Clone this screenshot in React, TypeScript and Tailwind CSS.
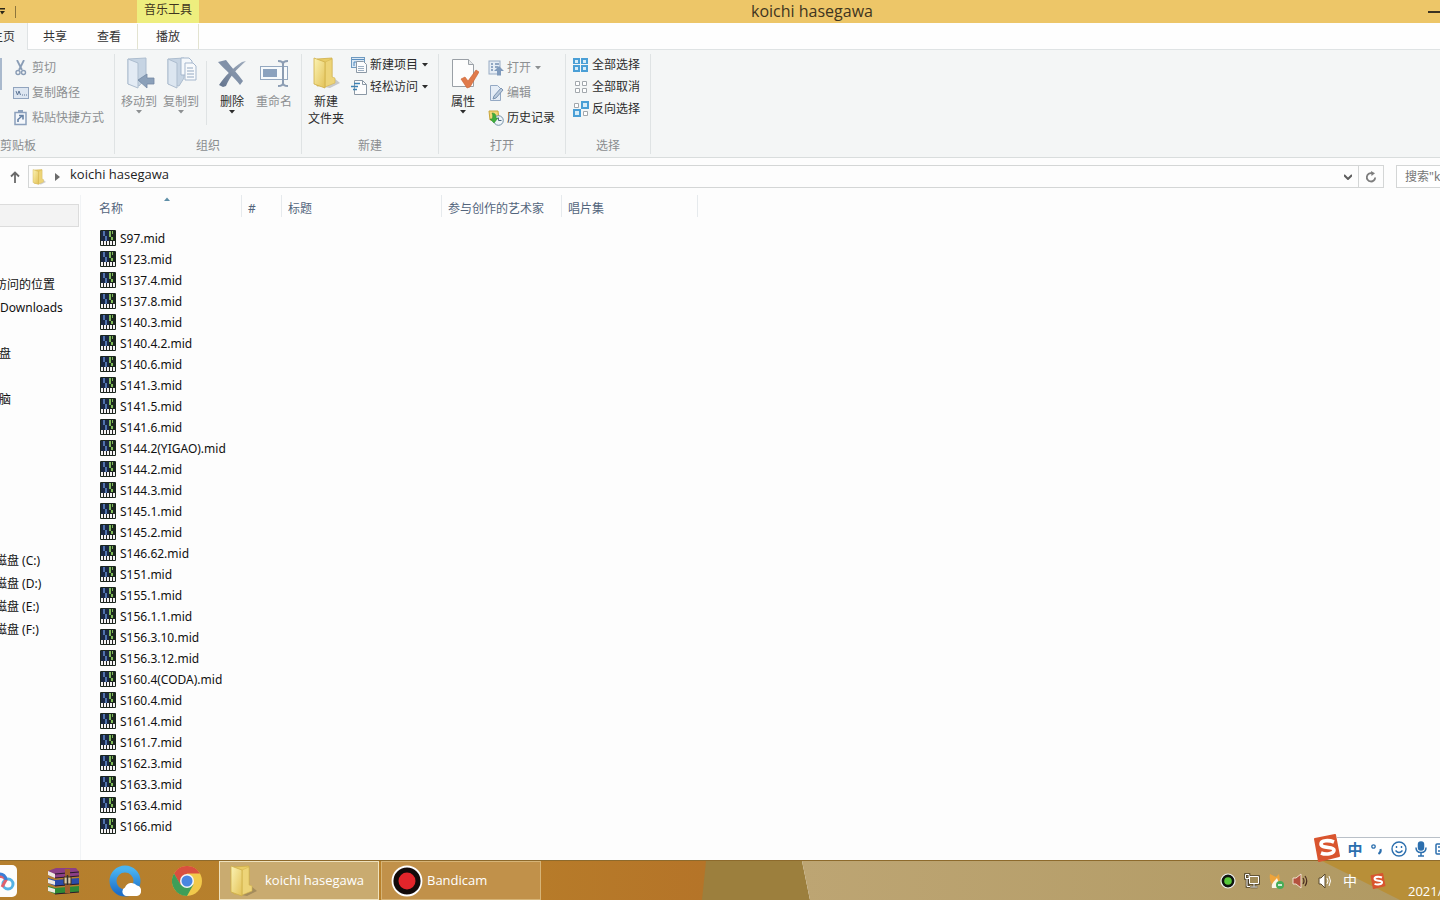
import type { ReactNode } from "react";

const files = [
  "S97.mid",
  "S123.mid",
  "S137.4.mid",
  "S137.8.mid",
  "S140.3.mid",
  "S140.4.2.mid",
  "S140.6.mid",
  "S141.3.mid",
  "S141.5.mid",
  "S141.6.mid",
  "S144.2(YIGAO).mid",
  "S144.2.mid",
  "S144.3.mid",
  "S145.1.mid",
  "S145.2.mid",
  "S146.62.mid",
  "S151.mid",
  "S155.1.mid",
  "S156.1.1.mid",
  "S156.3.10.mid",
  "S156.3.12.mid",
  "S160.4(CODA).mid",
  "S160.4.mid",
  "S161.4.mid",
  "S161.7.mid",
  "S162.3.mid",
  "S163.3.mid",
  "S163.4.mid",
  "S166.mid",
];

// One entry per 23px row of the navigation pane, empty rows included
const navRows = [
  "",
  "",
  "访问的位置",
  "Downloads",
  "",
  "盘",
  "",
  "脑",
  "",
  "",
  "",
  "",
  "",
  "",
  "磁盘 (C:)",
  "磁盘 (D:)",
  "磁盘 (E:)",
  "磁盘 (F:)",
];

function Caret({ className = "" }: { className?: string }) {
  return (
    <svg className={className} width="6" height="4" viewBox="0 0 6 4" fill="currentColor">
      <path d="M0 0h6L3 3.5z" />
    </svg>
  );
}

function FolderIcon({ size = 32 }: { size?: number }) {
  return (
    <svg className="shrink-0" width={size} height={size} viewBox="0 0 32 32">
      <defs>
        <linearGradient id="folder-front" x1="0" x2="1" y1="0" y2="1">
          <stop offset="0" stopColor="#fbf3b4" />
          <stop offset="1" stopColor="#e3c257" />
        </linearGradient>
      </defs>
      <path d="M24 21l6 5-10 5-6-1z" fill="#000" opacity=".18" />
      <path d="M7 2l15-1v20l-3 7-12 1z" fill="#e8cc66" stroke="#cfae48" strokeWidth=".8" />
      <path d="M15 5l7-3v18l3 1v5l-10 4z" fill="#edd478" stroke="#d5b650" strokeWidth=".6" />
      <path d="M4 1l11 4v26L4 27z" fill="url(#folder-front)" stroke="#cfae48" strokeWidth=".8" />
    </svg>
  );
}

function MoveToIcon() {
  return (
    <svg width="32" height="32" viewBox="0 0 32 32">
      <path d="M5 2l18-1v20l-7 8-11-2z" fill="#c6d4e3" stroke="#adbdcf" />
      <path d="M5 2l10 4v25L5 27z" fill="#e3ebf4" stroke="#adbdcf" />
      <path d="M15 23l9-6v4h7v6h-7v4z" fill="#8ba0b9" stroke="#7389a3" strokeWidth=".8" />
    </svg>
  );
}

function CopyToIcon() {
  return (
    <svg width="32" height="32" viewBox="0 0 32 32">
      <path d="M3 2l16-1v20l-5 8-11-2z" fill="#c6d4e3" stroke="#adbdcf" />
      <path d="M3 2l9 4v25l-9-4z" fill="#dce6f0" stroke="#adbdcf" />
      <path d="M16 1h8l3 3v14H16z" fill="#f5f8fb" stroke="#a5b7cd" />
      <path d="M20 6h8l3 3v14H20z" fill="#f8fafc" stroke="#a5b7cd" />
      <path d="M22 11h6M22 14h7M22 17h7M22 20h7" stroke="#93a8c1" />
    </svg>
  );
}

function DeleteIcon() {
  return (
    <svg width="32" height="32" viewBox="0 0 32 32">
      <defs>
        <linearGradient id="delete-stroke" x1="0" x2="1" y1="1" y2="0">
          <stop offset="0" stopColor="#62738d" />
          <stop offset="1" stopColor="#a0adbe" />
        </linearGradient>
      </defs>
      <path d="M2 5l8-2c5 7 12 14 17 21l-3 4C18 20 10 14 2 5z" fill="#8191a8" />
      <path d="M30 4l-4 1C17 11 9 19 3 28l4 2 3-1C14 19 21 12 30 4z" fill="url(#delete-stroke)" />
    </svg>
  );
}

function RenameIcon() {
  return (
    <svg width="32" height="32" viewBox="0 0 32 32" fill="none">
      <rect x="2.5" y="9.5" width="27" height="13" fill="#f7fafc" stroke="#94a8c0" />
      <rect x="5" y="12" width="14" height="8" fill="#8ba2be" />
      <path d="M20 4q5 0 5 3q0-3 5-3M25 6v21M20 29q5 0 5-3q0 3 5 3" stroke="#8c9db3" strokeWidth="2" />
    </svg>
  );
}

function PropertiesIcon() {
  return (
    <svg width="32" height="32" viewBox="0 0 32 32">
      <path d="M5.500 2.500h16l5 5v22h-21z" fill="#fdfdfd" stroke="#9aa0a6" />
      <path d="M21.500 2.500v5h5" fill="#e5e8ea" stroke="#9aa0a6" />
      <path d="M14 22l4-2 3 4 8-11 3 2-9 15-3 1z" fill="#e07a4a" stroke="#c9602f" strokeWidth=".6" />
    </svg>
  );
}

function ScissorsIcon() {
  return (
    <svg width="16" height="16" viewBox="0 0 16 16" fill="none" stroke="#8a9db6">
      <path d="M4 0l5 10M11 0L6 10" strokeWidth="1.800" />
      <circle cx="5" cy="12.500" r="2" strokeWidth="1.400" />
      <circle cx="10.500" cy="12.500" r="2" strokeWidth="1.400" />
    </svg>
  );
}

function CopyPathIcon() {
  return (
    <svg width="16" height="16" viewBox="0 0 16 16" fill="none">
      <rect x=".5" y="2.500" width="15" height="11" fill="#dde6f1" stroke="#91a4be" />
      <path d="M3 6l1.500 4L6 6l1.500 4M9 10h1M11 10h1M13 10h1" stroke="#5e7797" />
    </svg>
  );
}

function PasteShortcutIcon() {
  return (
    <svg width="16" height="16" viewBox="0 0 16 16" fill="none">
      <rect x="2" y="2.500" width="11" height="12" fill="#f4f7fb" stroke="#8ba0bc" strokeWidth="1.500" />
      <rect x="5" y="0" width="5" height="3" fill="#8ba0bc" />
      <path d="M5 12V9.500L9 6M6 5.500h4v4" stroke="#6682a6" strokeWidth="1.600" />
    </svg>
  );
}

function NewItemIcon() {
  return (
    <svg width="16" height="16" viewBox="0 0 16 16" fill="none">
      <rect x=".5" y=".5" width="13" height="10" fill="#dbe9f5" stroke="#6f9ac0" />
      <path d="M1 2.500h12" stroke="#5b8fc0" />
      <path d="M3 9V5h3" stroke="#4d86bb" />
      <path d="M5.500 4.500h7l3 3v8h-10z" fill="#fbfcfd" stroke="#8b98a5" />
      <path d="M7 9.500h6M7 11.500h6M7 13.500h6" stroke="#9db0c3" />
    </svg>
  );
}

function EasyAccessIcon() {
  return (
    <svg width="16" height="16" viewBox="0 0 16 16" fill="none">
      <path d="M3.500 1.500h8l4 4v10h-12z" fill="#fdfdfd" stroke="#8b98a5" />
      <path d="M11.500 1.500v4h4" stroke="#8b98a5" />
      <path d="M3 4.500h6M0 7.500h7M2 10.500h4" stroke="#3d82b5" strokeWidth="1.500" />
    </svg>
  );
}

function OpenIcon() {
  return (
    <svg width="16" height="16" viewBox="0 0 16 16" fill="none">
      <rect x="1" y="1" width="11" height="13" fill="#e6edf5" stroke="#98abc4" />
      <path d="M3 4h2M7 4h4M3 7h2M7 7h3M3 10h2" stroke="#7590b2" strokeWidth="1.500" />
      <path d="M11 6l5 5h-3v4.500H9V11H6z" fill="#7f9abc" />
    </svg>
  );
}

function EditIcon() {
  return (
    <svg width="16" height="16" viewBox="0 0 16 16" fill="none">
      <path d="M2.500.5h7l3 3v12h-10z" fill="#e5edf6" stroke="#94a9c4" />
      <path d="M5 14l1-3 7-8 2 2-7 8z" fill="#b9c9dc" stroke="#7b93b1" />
    </svg>
  );
}

function HistoryIcon() {
  return (
    <svg width="16" height="16" viewBox="0 0 16 16" fill="none">
      <path d="M1 1h9l1 9H2z" fill="#f2d877" stroke="#c9a53a" />
      <circle cx="10.500" cy="10.500" r="4.800" fill="#eef4f8" stroke="#7693a8" />
      <path d="M10.500 7.500v3h3" stroke="#4c6b83" />
      <path d="M4 3c4 0 4 3 4 5h2l-4 5-4-4h2c1-2 1-4 0-6z" fill="#3fae3c" stroke="#27872b" strokeWidth=".5" />
    </svg>
  );
}

function SelectAllIcon() {
  return (
    <svg width="16" height="16" viewBox="0 0 16 16">
      <path d="M0 1h7v6H0zM8 1h7v6H8zM0 8h7v7H0zM8 8h7v7H8z" fill="#4a9fd6" />
      <path d="M2 3h3v3H2zM10 3h3v3h-3zM2 10h3v3H2zM10 10h3v3h-3z" fill="#d7edf9" />
    </svg>
  );
}

function SelectNoneIcon() {
  return (
    <svg width="16" height="16" viewBox="0 0 16 16" fill="#fff" stroke="#a2a8ad">
      <path d="M2.500 2.500h4v4h-4zM9.500 2.500h4v4h-4zM2.500 9.500h4v4h-4zM9.500 9.500h4v4h-4z" />
    </svg>
  );
}

function InvertIcon() {
  return (
    <svg width="16" height="16" viewBox="0 0 16 16">
      <path d="M1.500 2.500h4v4h-4zM10.500 10.500h4v4h-4z" fill="#fff" stroke="#a2a8ad" />
      <path d="M8 0h8v8H8zM0 8h8v8H0z" fill="#4a9fd6" />
      <path d="M10 2h4v4h-4zM2 10h4v4H2z" fill="#d7edf9" />
    </svg>
  );
}

function MidiIcon() {
  return (
    <svg className="shrink-0" width="16" height="16" viewBox="0 0 16 16">
      <rect width="16" height="16" rx="1" fill="#1b261e" />
      <path d="M1 1h8v10H1z" fill="#1a2844" />
      <path d="M3 1h2v5H3zM5 6h2v5H5z" fill="#4f72ad" />
      <path d="M9 1h2v6H9zM11 7h2v3h-2zM12 1h1v3h-1z" fill="#7fba58" />
      <path d="M1 11h14v4H1z" fill="#f4f4f4" />
      <path d="M3.500 11v4M6.500 11v4M9.500 11v4M12.500 11v4" stroke="#222" />
    </svg>
  );
}

function SogouIcon({ size }: { size: number }) {
  return (
    <svg className="relative z-10 shrink-0" width={size} height={size} viewBox="0 0 28 28">
      <path d="M2 5L22 1l4 21-20 5z" fill="#d9552f" stroke="#d9552f" strokeWidth="2" strokeLinejoin="round" />
      <path d="M21 8c-5-2-13-2-13 2 0 5 13 2 13 6 0 4-8 5-13 3" fill="none" stroke="#fff" strokeWidth="3.600" />
    </svg>
  );
}

function LargeButton({ icon, label, caret = false, muted = false }: { icon: ReactNode; label: ReactNode; caret?: boolean; muted?: boolean }) {
  return (
    <button className={`flex w-[42px] flex-col items-center whitespace-nowrap ${muted ? "text-[#8d9092]" : "text-[#2c2c2c]"}`}>
      {icon}
      <span className="mt-1 leading-[17px]">{label}</span>
      {caret && <Caret />}
    </button>
  );
}

function SmallButton({ icon, label, caret = false, muted = false }: { icon: ReactNode; label: string; caret?: boolean; muted?: boolean }) {
  return (
    <button className={`flex h-4 items-center gap-[3px] whitespace-nowrap ${muted ? "text-[#8d9092]" : "text-[#2c2c2c]"}`}>
      {icon}
      <span>{label}</span>
      {caret && <Caret className="ml-px" />}
    </button>
  );
}

function Group({ label, className, children }: { label: string; className: string; children: ReactNode }) {
  return (
    <section className={`flex shrink-0 flex-col border-r border-[#dfe3e4] ${className}`}>
      <div className="flex flex-1">{children}</div>
      <h2 className="self-center whitespace-nowrap text-[#8a8d8f]">{label}</h2>
    </section>
  );
}

function Ribbon() {
  return (
    <div className="flex h-[108px] overflow-hidden border-b border-[#d9dddd] bg-[#f4f6f6] pt-1 pb-[3px]">
      <Group label="剪贴板" className="w-[115px] items-start [&>h2]:self-start">
        <div className="mt-1 h-8 w-0.5 shrink-0 bg-[#a9b9cd]" />
        <div className="ml-[11px] flex flex-col gap-[9px] pt-1.5">
          <SmallButton muted icon={<ScissorsIcon />} label="剪切" />
          <SmallButton muted icon={<CopyPathIcon />} label="复制路径" />
          <SmallButton muted icon={<PasteShortcutIcon />} label="粘贴快捷方式" />
        </div>
      </Group>
      <Group label="组织" className="w-[187px]">
        <div className="flex items-start pt-[3px] pl-[3px]">
          <LargeButton muted caret icon={<MoveToIcon />} label="移动到" />
          <LargeButton muted caret icon={<CopyToIcon />} label="复制到" />
          <div className="mx-1 mt-1 h-16 border-l border-[#dfe3e4]" />
          <LargeButton caret icon={<DeleteIcon />} label="删除" />
          <LargeButton muted icon={<RenameIcon />} label="重命名" />
        </div>
      </Group>
      <Group label="新建" className="w-[137px]">
        <div className="flex items-start gap-1 pt-[3px] pl-[3px]">
          <LargeButton icon={<FolderIcon />} label={<>新建<br />文件夹</>} />
          <div className="flex flex-col gap-1.5">
            <SmallButton caret icon={<NewItemIcon />} label="新建项目" />
            <SmallButton caret icon={<EasyAccessIcon />} label="轻松访问" />
          </div>
        </div>
      </Group>
      <Group label="打开" className="w-[127px]">
        <div className="flex items-start gap-1 pt-[3px] pl-[3px]">
          <LargeButton caret icon={<PropertiesIcon />} label="属性" />
          <div className="flex flex-col gap-[9px] pt-[3px]">
            <SmallButton muted caret icon={<OpenIcon />} label="打开" />
            <SmallButton muted icon={<EditIcon />} label="编辑" />
            <SmallButton icon={<HistoryIcon />} label="历史记录" />
          </div>
        </div>
      </Group>
      <Group label="选择" className="w-[85px]">
        <div className="flex flex-col gap-1.5 pt-[3px] pl-[7px]">
          <SmallButton icon={<SelectAllIcon />} label="全部选择" />
          <SmallButton icon={<SelectNoneIcon />} label="全部取消" />
          <SmallButton icon={<InvertIcon />} label="反向选择" />
        </div>
      </Group>
    </div>
  );
}

function AddressBar() {
  return (
    <div className="flex items-center py-[7px] text-[#1e1e1e]">
      <button aria-label="向上" className="flex w-7 justify-center pl-0.5 text-[#6a6a6a]">
        <svg width="10" height="12" viewBox="0 0 10 12" fill="none" stroke="currentColor" strokeWidth="1.800">
          <path d="M5 12V1.500M1 5.500l4-4 4 4" />
        </svg>
      </button>
      <div className="flex h-[23px] flex-1 items-center border border-[#d4d6d6] pl-0.5">
        <FolderIcon size={16} />
        <svg className="ml-2 shrink-0" width="5" height="8" viewBox="0 0 5 8" fill="#6b6b6b">
          <path d="M0 0l5 4-5 4z" />
        </svg>
        <button className="ml-2.5 pb-1 font-['Open_Sans'] text-[13px] leading-[19px]">koichi hasegawa</button>
        <button aria-label="历史" className="ml-auto px-1.5 text-[#5d5d5d]">
          <svg width="8" height="6" viewBox="0 0 8 6" fill="none" stroke="currentColor" strokeWidth="2">
            <path d="M0 1l4 4 4-4" />
          </svg>
        </button>
        <button aria-label="刷新" className="flex h-full w-[25px] items-center justify-center border-l border-[#d4d6d6] text-[#7d7d7d]">
          <svg width="12" height="12" viewBox="0 0 12 12" fill="none" stroke="currentColor" strokeWidth="1.800">
            <path d="M7 2.200A4.200 4.200 0 1 0 10.200 6.500" />
            <path d="M6 0l4 2.300L6.500 5z" fill="currentColor" stroke="none" />
          </svg>
        </button>
      </div>
      <input
        aria-label="搜索"
        placeholder={'搜索"koichi hasegawa"'}
        className="ml-3 h-[23px] w-11 border border-r-0 border-[#d4d6d6] bg-white pl-2 outline-none placeholder:text-[#767676]"
      />
    </div>
  );
}

function FileTable() {
  return (
    <table className="w-full table-fixed border-collapse text-left">
      <colgroup>
        <col className="w-[161px]" />
        <col className="w-10" />
        <col className="w-40" />
        <col className="w-[120px]" />
        <col className="w-[136px]" />
        <col />
      </colgroup>
      <thead className="text-[#53657c]">
        <tr className="h-8 align-top">
          {["名称", "#", "标题", "参与创作的艺术家", "唱片集"].map((title, i) => (
            <th key={title} className="relative p-0 font-normal">
              <button className={`flex h-[22px] w-full items-center border-r border-[#e6eaed] pt-1.5 whitespace-nowrap ${i === 0 ? "pl-[18px]" : "pl-1.5"}`}>
                {title}
              </button>
              {i === 0 && <Caret className="absolute top-0.5 left-[83px] rotate-180 text-[#5f8fa8]" />}
            </th>
          ))}
          <th className="p-0" />
        </tr>
      </thead>
      <tbody className="text-[#111]">
        {files.map((name) => (
          <tr key={name} className="h-[21px]">
            <td colSpan={6} className="p-0">
              <div className="flex h-[21px] items-center gap-1 pl-[19px]">
                <MidiIcon />
                <span className="pt-0.5">{name}</span>
              </div>
            </td>
          </tr>
        ))}
      </tbody>
    </table>
  );
}

function Taskbar() {
  return (
    <footer className="relative flex h-10 shrink-0 items-stretch overflow-hidden border-t border-[#8d6a2c] font-['Open_Sans','Noto_Sans_CJK_SC',sans-serif] text-[13px] text-white">
      <svg className="absolute inset-0 h-full w-full" viewBox="0 0 1440 40" preserveAspectRatio="none">
        <defs>
          <linearGradient id="bar-left">
            <stop offset="0" stopColor="#b57f2e" />
            <stop offset=".6" stopColor="#b8802a" />
            <stop offset="1" stopColor="#b57428" />
          </linearGradient>
          <linearGradient id="bar-right">
            <stop offset="0" stopColor="#bda573" />
            <stop offset="1" stopColor="#b09962" />
          </linearGradient>
        </defs>
        <rect width="706" height="40" fill="url(#bar-left)" />
        <path d="M706 0h96l8 40H702z" fill="#9c7f3d" />
        <path d="M802 0h638v40H810z" fill="url(#bar-right)" />
        <path d="M1322 0h118v40h-40z" fill="#b88f38" />
      </svg>
      <div className="relative flex flex-1 items-stretch">
        <button aria-label="百度网盘" className="flex w-8 items-center overflow-hidden">
          <svg className="-ml-4 shrink-0" width="33" height="32" viewBox="0 0 33 32" fill="none">
            <rect width="33" height="32" rx="5" fill="#fdfdfd" />
            <circle cx="9" cy="19" r="5" stroke="#4fa4e8" strokeWidth="3" />
            <circle cx="24" cy="19" r="5" stroke="#56b3e6" strokeWidth="3" />
            <path d="M14 12a6 6 0 0 1 8 3l-4 7" stroke="#e0616d" strokeWidth="3" />
            <path d="M15 9a6 6 0 0 1 7 6" stroke="#3b7ed6" strokeWidth="3" />
          </svg>
        </button>
        <button aria-label="WinRAR" className="flex w-[62px] items-center justify-center">
          <svg width="32" height="28" viewBox="0 0 32 28">
            <path d="M1 4l8-3h20l3 4v4L8 11 1 8z" fill="#8b3f86" />
            <path d="M1 11l7 2 24-2v6L8 19l-7-3z" fill="#2b4ca8" />
            <path d="M1 19l7 2 24-2v6L8 27l-7-3z" fill="#2f8a35" />
            <path d="M1 4l7 3v4L1 8zM1 12l7 2v4l-7-2zM1 20l7 2v4l-7-2z" fill="#efe9e0" />
            <path d="M8 7l24-2M8 11l24-2M8 19l24-2M8 27l24-2" stroke="#2b1a2b" strokeWidth="1.200" />
            <path d="M18 2h5v24h-5z" fill="#a0622d" />
            <path d="M17 10h7v7h-7z" fill="#d8c9a8" stroke="#4b3216" />
            <path d="M20.500 8v10" stroke="#333" strokeWidth="1.500" />
          </svg>
        </button>
        <button aria-label="QQ浏览器" className="flex w-[62px] items-center justify-center">
          <svg width="32" height="32" viewBox="0 0 32 32">
            <defs>
              <linearGradient id="qq" x1="0" x2="0" y1="0" y2="1">
                <stop offset="0" stopColor="#4ab4f0" />
                <stop offset="1" stopColor="#1e6fc9" />
              </linearGradient>
            </defs>
            <circle cx="16" cy="16" r="12" fill="none" stroke="url(#qq)" strokeWidth="7" />
            <path d="M17 31a4.500 4.500 0 0 1-1-8.500 7 7 0 0 1 12-2 5.400 5.400 0 0 1 0 10.500z" fill="#fff" />
          </svg>
        </button>
        <button aria-label="Chrome" className="flex w-[62px] items-center justify-center">
          <svg width="30" height="30" viewBox="0 0 30 30">
            <circle cx="15" cy="15" r="15" fill="#f2c94b" />
            <path d="M2 7.500A15 15 0 0 1 28 7.500H15L8.500 19z" fill="#d9503f" />
            <path d="M2 7.500A15 15 0 0 0 15 30l6.500-11.500h-13z" fill="#3f9e58" />
            <circle cx="15" cy="15" r="7" fill="#f5f5f5" />
            <circle cx="15" cy="15" r="5.500" fill="#4a86e0" />
          </svg>
        </button>
        <button className="ml-px flex w-40 items-center gap-1.5 border border-[#efe2bd] bg-[#c9ab70] pl-[7px] whitespace-nowrap">
          <FolderIcon />
          koichi hasegawa
        </button>
        <button className="ml-0.5 flex w-40 items-center gap-1 border border-[#d6b477] bg-[#c1914a] pl-[9px]">
          <svg width="32" height="32" viewBox="0 0 32 32">
            <circle cx="16" cy="16" r="14.500" fill="#120a0a" stroke="#fff" strokeWidth="1.800" />
            <circle cx="16" cy="16" r="8.500" fill="#e3252b" />
          </svg>
          Bandicam
        </button>
        <div className="ml-auto flex items-center">
          <button aria-label="录制" className="flex w-6 justify-center">
            <svg width="16" height="16" viewBox="0 0 16 16">
              <circle cx="8" cy="8" r="7" fill="#101510" stroke="#f3f3f3" strokeWidth="1.200" />
              <circle cx="8" cy="8" r="3.800" fill="#58c83a" />
            </svg>
          </button>
          <button aria-label="网络" className="flex w-6 justify-center">
            <svg width="16" height="16" viewBox="0 0 16 16" fill="none">
              <path d="M5.500 3.500h9v7h-9zM10 10.500v3M6.500 14h7M3 6v7.500h3M1.500 1.500h3.500v4H1.500z" stroke="#4a3e26" strokeWidth="2.600" />
              <path d="M5.500 3.500h9v7h-9z" fill="#a18b58" />
              <path d="M5.500 3.500h9v7h-9zM10 10.500v3M6.500 14h7M3 6v7.500h3M1.500 1.500h3.500v4H1.500z" stroke="#fff" strokeWidth="1" />
            </svg>
          </button>
          <button aria-label="安全" className="flex w-6 justify-center">
            <svg width="16" height="16" viewBox="0 0 16 16">
              <path d="M2 1l6 3 3-3 1 7-4 6C3 12 1 7 2 1z" fill="#eda43c" />
              <path d="M4 15c-1-5 2-6 5-10l2 5 3 5z" fill="#fbf5e8" />
              <circle cx="12" cy="12" r="4" fill="#47ad58" />
              <path d="M10 12h4" stroke="#fff" strokeWidth="1.500" />
            </svg>
          </button>
          <button aria-label="音效" className="flex w-6 justify-center">
            <svg width="16" height="16" viewBox="0 0 16 16" fill="none">
              <path d="M1 5h3l5-4v14l-5-4H1z" fill="#b4523e" stroke="#f0dfce" />
              <path d="M11 5q2 3 0 6M13 3q3.500 5 0 10" stroke="#4a2c20" strokeWidth="1.200" />
            </svg>
          </button>
          <button aria-label="音量" className="flex w-6 justify-center">
            <svg width="16" height="16" viewBox="0 0 16 16" fill="none">
              <path d="M3 5h2l4-4v14l-4-4H3z" fill="#fff" stroke="#5a4a2c" />
              <path d="M11 5q2 3 0 6M13 3q3 5 0 10" stroke="#fff" />
            </svg>
          </button>
          <button className="w-7 text-sm">中</button>
          <button aria-label="搜狗" className="flex w-7 justify-center">
            <SogouIcon size={16} />
          </button>
          <time className="ml-4 w-8 self-end overflow-hidden whitespace-nowrap">2021/</time>
        </div>
      </div>
    </footer>
  );
}

// Floating input method bar, sits over the window and the top of the taskbar
function InputBar() {
  return (
    <div className="absolute right-0 bottom-[38px] flex items-end">
      <SogouIcon size={28} />
      <div className="mb-0.5 -ml-1 flex h-[23px] w-[103px] items-center overflow-hidden border-t border-[#b9c0c8] bg-white pl-2 text-[15px] font-bold text-[#2c6fae]">
        <button className="w-5 shrink-0">中</button>
        <button aria-label="标点" className="flex w-6 shrink-0 justify-center">
          <svg width="12" height="12" viewBox="0 0 12 12" fill="none" stroke="currentColor">
            <circle cx="2.500" cy="3.500" r="1.700" strokeWidth="1.300" />
            <path d="M9.500 6q1 3-2 5" strokeWidth="2" />
          </svg>
        </button>
        <button aria-label="表情" className="flex w-5 shrink-0 justify-center">
          <svg width="16" height="16" viewBox="0 0 16 16" fill="none" stroke="currentColor" strokeWidth="1.400">
            <circle cx="8" cy="8" r="7" />
            <path d="M5.500 5v2M10.500 5v2M4.500 9.500q3.500 4 7 0" />
          </svg>
        </button>
        <button aria-label="语音" className="flex w-6 shrink-0 justify-center">
          <svg width="14" height="16" viewBox="0 0 14 16" fill="none" stroke="currentColor" strokeWidth="1.500">
            <rect x="4.500" y="1" width="5" height="8" rx="2.500" fill="currentColor" />
            <path d="M2 6.500q0 5 5 5t5-5M7 12v3M4 15h6" />
          </svg>
        </button>
        <button aria-label="键盘" className="shrink-0 pl-0.5">
          <svg width="16" height="12" viewBox="0 0 16 12" fill="none" stroke="currentColor" strokeWidth="1.500">
            <rect x="1" y="1" width="14" height="10" rx="1" />
            <path d="M3 4h2M7 4h2M3 8h2M7 8h2" />
          </svg>
        </button>
      </div>
    </div>
  );
}

export default function App() {
  return (
    <div className="relative flex min-h-screen flex-col overflow-hidden bg-[#fdfdfd] font-['Noto_Sans','Noto_Sans_CJK_SC',sans-serif] text-xs">
      <header className="flex h-[23px] items-stretch bg-[#edc668] text-[#3f3520]">
        <div className="flex w-[137px] items-center">
          <button aria-label="自定义快速访问工具栏" className="w-[15px]">
            <svg width="5" height="7" viewBox="0 0 5 7" fill="#2b2618">
              <path d="M0 0h5v1.500H0zM0 3h5L2 6.500z" />
            </svg>
          </button>
          <div className="h-3 border-l border-[#8d753c]" />
        </div>
        <div className="w-[62px] bg-[#eeee7e] text-center leading-[20px]">音乐工具</div>
        <h1 className="flex-1 text-center font-['Open_Sans'] text-base leading-[23px]">koichi hasegawa</h1>
        <button aria-label="最小化" className="flex w-[15px] items-center justify-end">
          <span className="h-0.5 w-3 bg-[#3a3222]" />
        </button>
      </header>

      <nav className="flex h-[27px] items-stretch border-b border-[#dfe3e4] bg-[#fefefe] pt-px text-[#333]">
        <button className="-mt-px -mb-px flex w-7 justify-end overflow-hidden border-r border-[#dfe3e4] bg-[#f4f6f6] pr-3 leading-[28px] whitespace-nowrap">主页</button>
        <button className="w-[54px]">共享</button>
        <button className="w-[54px]">查看</button>
        <button className="ml-px w-[62px] border-x border-[#e3e3d0]">播放</button>
      </nav>

      <Ribbon />
      <AddressBar />

      <div className="flex flex-1 items-stretch">
        <aside className="w-20 shrink-0 overflow-hidden pt-[9px] text-[#111]">
          <div className="mr-px h-[23px] border border-l-0 border-[#dcdcdc] bg-[#f3f3f3]" />
          <ul className="-ml-[5px]">
            {navRows.map((row, i) => (
              <li key={i} className={`h-[23px] leading-[23px] whitespace-nowrap ${row === "Downloads" ? "pl-[5px]" : row.length === 1 ? "pl-1" : ""}`}>
                {row}
              </li>
            ))}
          </ul>
        </aside>
        <main className="flex-1 border-l border-[#f1f3f5]">
          <FileTable />
        </main>
      </div>

      <Taskbar />
      <InputBar />
    </div>
  );
}
